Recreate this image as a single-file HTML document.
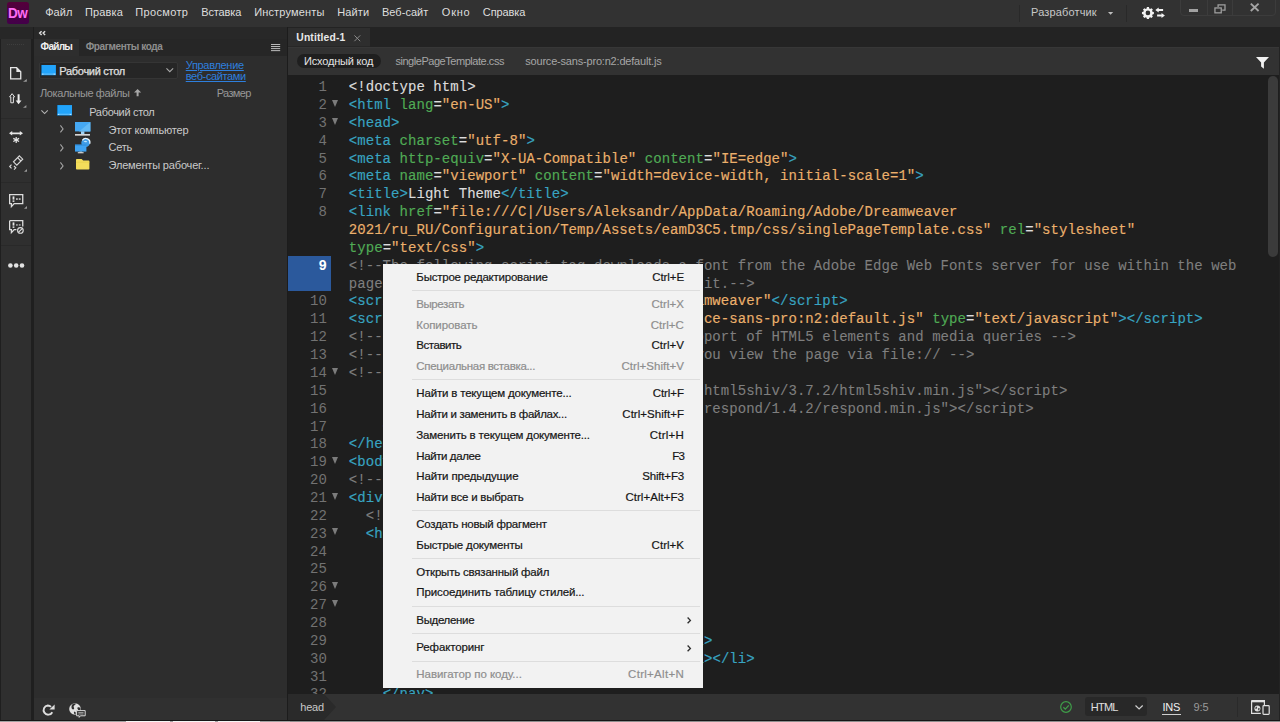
<!DOCTYPE html>
<html>
<head>
<meta charset="utf-8">
<title>Dreamweaver</title>
<style>
*{box-sizing:border-box;margin:0;padding:0}
html,body{width:1280px;height:722px;overflow:hidden;background:#1e1e1e;font-family:"Liberation Sans",sans-serif;}
body{position:relative;color:#d6d6d6;font-size:11px}
.abs{position:absolute}
.tx{position:absolute;white-space:pre;line-height:16px;height:16px;font-family:"Liberation Sans",sans-serif}
svg{position:absolute;overflow:visible}
#menubar{left:0;top:0;width:1280px;height:27px;background:#323232}
#band{left:288px;top:27px;width:992px;height:20px;background:#232323}
#ltop{left:0;top:27px;width:33px;height:12px;background:#272727}
#lefttool{left:0;top:39px;width:31px;height:682px;background:#2f2f2f;border-left:1px solid #1f1f1f}
#lsep{left:31px;top:39px;width:2.5px;height:682px;background:#1f1f1f}
#fhead{left:33.5px;top:27px;width:253px;height:12px;background:#282828}
#ftabs{left:33.5px;top:39px;width:253px;height:16.5px;background:#262626}
#ftab1{left:33.5px;top:39px;width:45.5px;height:17px;background:#2e2e2e}
#files{left:33.5px;top:55.5px;width:253px;height:643px;background:#2d2d2d}
#fbot{left:33.5px;top:698px;width:253px;height:23px;background:#303030}
#fsep{left:286.5px;top:27px;width:1.5px;height:694px;background:#1c1c1c}
#doctab{left:288px;top:28.4px;width:82px;height:18.6px;background:#2e2e2e;border-bottom:0.8px solid #272727}
#doctool{left:288px;top:47px;width:992px;height:28px;background:#323232;border-top:1px solid #373737}
#pill{left:297px;top:53.5px;width:83.5px;height:14.5px;background:#1f1f1f;border-radius:8px}
#code{left:288px;top:75px;width:992px;height:618.5px;background:#1e1e1e;overflow:hidden}
#status{left:288px;top:693.5px;width:992px;height:27px;background:#323232}
#bottom{left:0;top:719.6px;width:1280px;height:2.4px;background:#a2a2a2;border-top:1px solid #161616}
.ln{position:absolute;left:0;width:38.8px;text-align:right;font-family:"Liberation Mono",monospace;font-size:14px;line-height:18px;color:#727272;height:18px}
.ln.cur{color:#fff;font-weight:700}
.cl{position:absolute;left:60.8px;font-family:"Liberation Mono",monospace;font-size:14px;line-height:18px;height:18px;white-space:pre;color:#dcdcdc;letter-spacing:0.053px;-webkit-text-stroke:0.15px}
.t{color:#38a4c1}.a{color:#50ab55}.s{color:#ebb06c}.c{color:#7f7f7f;-webkit-text-stroke:0.08px}.w{color:#dcdcdc}
.fold{position:absolute;left:43.8px;width:0;height:0;border-left:3.9px solid transparent;border-right:3.9px solid transparent;border-top:7.4px solid #7c7c7c}
#curln{left:0;top:180.8px;width:43.2px;height:35.4px;background:#2b599c}
#scroll{left:1268.1px;top:75.6px;width:10.4px;height:181.4px;background:#3b3b3b;border-radius:5.2px}
#ctx{left:382.7px;top:263.7px;width:320.3px;height:424.1px;background:#f2f2f2}
#ctx .sep{position:absolute;left:29.8px;width:288px;height:1px;background:#dddddd}
#htmlbox{left:1085px;top:697.2px;width:62.3px;height:18.8px;background:#282828;border-radius:3px}
#crumb{left:288px;top:693.5px;width:36px;height:27px;background:#2a2a2a}
#crumbarrow{left:324px;top:693.5px;width:0;height:0;border-top:13.5px solid transparent;border-bottom:13.5px solid transparent;border-left:12px solid #2a2a2a}
#insul{left:1162px;top:713.5px;width:19px;height:1px;background:#d0d0d0}
#dd{left:38.5px;top:61.6px;width:139.2px;height:17.2px;background:#262626;border:1px solid #353535;border-radius:2px}
#winctl{left:1180.2px;top:-1px;width:96px;height:17.2px;border:1px solid #3c3c3c;border-radius:0 0 4px 4px}
.wdiv{position:absolute;top:0;width:1px;height:15.8px;background:#3c3c3c}
.msep{position:absolute;top:5px;width:1px;height:17px;background:#292929}
.hsep{position:absolute;left:1px;width:30px;height:1px;background:#292929}
</style>
</head>
<body>
<div id="menubar" class="abs"></div>
<div id="band" class="abs"></div>
<div id="ltop" class="abs"></div>
<div id="lefttool" class="abs"></div>
<div id="lsep" class="abs"></div>
<div id="fhead" class="abs"></div>
<div id="ftabs" class="abs"></div>
<div id="ftab1" class="abs"></div>
<div id="files" class="abs"></div>
<div id="fbot" class="abs"></div>
<div id="fsep" class="abs"></div>
<div id="doctab" class="abs"></div>
<div id="doctool" class="abs"></div>
<div id="pill" class="abs"></div>
<div id="code" class="abs">
<div id="curln" class="abs"></div>
<div class="ln" style="top:3.17px">1</div>
<div class="cl" style="top:3.17px"><span class="w">&lt;!doctype html&gt;</span></div>
<div class="ln" style="top:21.03px">2</div>
<div class="fold" style="top:24.76px"></div>
<div class="cl" style="top:21.03px"><span class="t">&lt;html</span> <span class="a">lang</span><span class="w">=</span><span class="s">&quot;en-US&quot;</span><span class="t">&gt;</span></div>
<div class="ln" style="top:38.89px">3</div>
<div class="fold" style="top:42.62px"></div>
<div class="cl" style="top:38.89px"><span class="t">&lt;head&gt;</span></div>
<div class="ln" style="top:56.75px">4</div>
<div class="cl" style="top:56.75px"><span class="t">&lt;meta</span> <span class="a">charset</span><span class="w">=</span><span class="s">&quot;utf-8&quot;</span><span class="t">&gt;</span></div>
<div class="ln" style="top:74.61px">5</div>
<div class="cl" style="top:74.61px"><span class="t">&lt;meta</span> <span class="a">http-equiv</span><span class="w">=</span><span class="s">&quot;X-UA-Compatible&quot;</span> <span class="a">content</span><span class="w">=</span><span class="s">&quot;IE=edge&quot;</span><span class="t">&gt;</span></div>
<div class="ln" style="top:92.47px">6</div>
<div class="cl" style="top:92.47px"><span class="t">&lt;meta</span> <span class="a">name</span><span class="w">=</span><span class="s">&quot;viewport&quot;</span> <span class="a">content</span><span class="w">=</span><span class="s">&quot;width=device-width, initial-scale=1&quot;</span><span class="t">&gt;</span></div>
<div class="ln" style="top:110.33px">7</div>
<div class="cl" style="top:110.33px"><span class="t">&lt;title&gt;</span><span class="w">Light Theme</span><span class="t">&lt;/title&gt;</span></div>
<div class="ln" style="top:128.19px">8</div>
<div class="cl" style="top:128.19px"><span class="t">&lt;link</span> <span class="a">href</span><span class="w">=</span><span class="s">&quot;file:///C|/Users/Aleksandr/AppData/Roaming/Adobe/Dreamweaver</span></div>
<div class="cl" style="top:146.05px"><span class="s">2021/ru_RU/Configuration/Temp/Assets/eamD3C5.tmp/css/singlePageTemplate.css&quot;</span> <span class="a">rel</span><span class="w">=</span><span class="s">&quot;stylesheet&quot;</span></div>
<div class="cl" style="top:163.91px"><span class="a">type</span><span class="w">=</span><span class="s">&quot;text/css&quot;</span><span class="t">&gt;</span></div>
<div class="ln cur" style="top:181.77px">9</div>
<div class="cl" style="top:181.77px"><span class="c">&lt;!--The following script tag downloads a font from the Adobe Edge Web Fonts server for use within the web</span></div>
<div class="cl" style="top:199.63px"><span class="c">page. We recommend that you do not modify it.--&gt;</span></div>
<div class="ln" style="top:217.49px">10</div>
<div class="cl" style="top:217.49px"><span class="t">&lt;script&gt;</span><span class="w">var __adobewebfontsappname__=</span><span class="s">&quot;dreamweaver&quot;</span><span class="t">&lt;/script&gt;</span></div>
<div class="ln" style="top:235.35px">11</div>
<div class="cl" style="top:235.35px"><span class="t">&lt;scr</span>                                      <span class="s">ce-sans-pro:n2:default.js&quot;</span> <span class="a">type</span><span class="w">=</span><span class="s">&quot;text/javascript&quot;</span><span class="t">&gt;&lt;/script&gt;</span></div>
<div class="ln" style="top:253.21px">12</div>
<div class="cl" style="top:253.21px"><span class="c">&lt;!-- HTML5 shim and Respond.js for IE8 support of HTML5 elements and media queries --&gt;</span></div>
<div class="ln" style="top:271.07px">13</div>
<div class="cl" style="top:271.07px"><span class="c">&lt;!-- WARNING: Respond.js doesn&#x27;t work if you view the page via file:// --&gt;</span></div>
<div class="ln" style="top:288.93px">14</div>
<div class="fold" style="top:292.66px"></div>
<div class="cl" style="top:288.93px"><span class="c">&lt;!--[if lt IE 9]&gt;</span></div>
<div class="ln" style="top:306.79px">15</div>
<div class="cl" style="top:306.79px"><span class="c">                                          html5shiv/3.7.2/html5shiv.min.js&quot;&gt;&lt;/script&gt;</span></div>
<div class="ln" style="top:324.65px">16</div>
<div class="cl" style="top:324.65px"><span class="c">                                          respond/1.4.2/respond.min.js&quot;&gt;&lt;/script&gt;</span></div>
<div class="ln" style="top:342.51px">17</div>
<div class="cl" style="top:342.51px"><span class="c">    &lt;![endif]--&gt;</span></div>
<div class="ln" style="top:360.37px">18</div>
<div class="cl" style="top:360.37px"><span class="t">&lt;/head&gt;</span></div>
<div class="ln" style="top:378.23px">19</div>
<div class="fold" style="top:381.96px"></div>
<div class="cl" style="top:378.23px"><span class="t">&lt;body&gt;</span></div>
<div class="ln" style="top:396.09px">20</div>
<div class="cl" style="top:396.09px"><span class="c">&lt;!-- Main Container --&gt;</span></div>
<div class="ln" style="top:413.95px">21</div>
<div class="fold" style="top:417.68px"></div>
<div class="cl" style="top:413.95px"><span class="t">&lt;div</span> <span class="a">class</span><span class="w">=</span><span class="s">&quot;container&quot;</span><span class="t">&gt;</span></div>
<div class="ln" style="top:431.81px">22</div>
<div class="cl" style="top:431.81px">  <span class="c">&lt;!-- Navigation --&gt;</span></div>
<div class="ln" style="top:449.67px">23</div>
<div class="fold" style="top:453.40px"></div>
<div class="cl" style="top:449.67px">  <span class="t">&lt;header&gt;</span> <span class="t">&lt;a</span> <span class="a">href</span><span class="w">=</span><span class="s">&quot;&quot;</span><span class="t">&gt;</span></div>
<div class="ln" style="top:467.53px">24</div>
<div class="cl" style="top:467.53px">    <span class="t">&lt;h4</span> <span class="a">class</span><span class="w">=</span><span class="s">&quot;logo&quot;</span><span class="t">&gt;</span><span class="w">LIGHT</span><span class="t">&lt;/h4&gt;</span></div>
<div class="ln" style="top:485.39px">25</div>
<div class="cl" style="top:485.39px">    <span class="t">&lt;/a&gt;</span></div>
<div class="ln" style="top:503.25px">26</div>
<div class="fold" style="top:506.98px"></div>
<div class="cl" style="top:503.25px">    <span class="t">&lt;nav&gt;</span></div>
<div class="ln" style="top:521.11px">27</div>
<div class="fold" style="top:524.84px"></div>
<div class="cl" style="top:521.11px">      <span class="t">&lt;ul&gt;</span></div>
<div class="ln" style="top:538.97px">28</div>
<div class="cl" style="top:538.97px">        <span class="t">&lt;li&gt;</span><span class="t">&lt;a</span> <span class="a">href</span><span class="w">=</span><span class="s">&quot;#hero&quot;</span><span class="t">&gt;</span><span class="w">HOME</span><span class="t">&lt;/a&gt;&lt;/li&gt;</span></div>
<div class="ln" style="top:556.83px">29</div>
<div class="cl" style="top:556.83px">        <span class="t">&lt;li&gt;</span><span class="t">&lt;a</span> <span class="a">href</span><span class="w">=</span><span class="s">&quot;#about&quot;</span><span class="t">&gt;</span><span class="w">ABOUT</span><span class="t">&lt;/a&gt;&lt;/li&gt;</span></div>
<div class="ln" style="top:574.69px">30</div>
<div class="cl" style="top:574.69px">        <span class="t">&lt;li&gt;</span> <span class="t">&lt;a</span> <span class="a">href</span><span class="w">=</span><span class="s">&quot;#contact&quot;</span><span class="t">&gt;</span><span class="w">CONTACT</span><span class="t">&lt;/a&gt;&lt;/li&gt;</span></div>
<div class="ln" style="top:592.55px">31</div>
<div class="cl" style="top:592.55px">      <span class="t">&lt;/ul&gt;</span></div>
<div class="ln" style="top:610.41px">32</div>
<div class="cl" style="top:610.41px">    <span class="t">&lt;/nav&gt;</span></div>
<div class="ln" style="top:628.27px">33</div>
<div class="cl" style="top:628.27px">  <span class="t">&lt;/header&gt;</span></div>
</div>
<div id="scroll" class="abs"></div>
<div id="status" class="abs"></div>
<div id="crumb" class="abs"></div>
<div id="crumbarrow" class="abs"></div>
<div id="htmlbox" class="abs"></div>
<div id="insul" class="abs"></div>
<div id="dd" class="abs"></div>
<div class="abs" style="left:1278.6px;top:27px;width:1.4px;height:693px;background:#232323"></div>
<div id="bottom" class="abs"><div class="abs" style="left:126px;top:0;width:43.5px;height:3px;background:#f4f4f4"></div><div class="abs" style="left:173px;top:0;width:42px;height:3px;background:#f4f4f4"></div><div class="abs" style="left:218px;top:0;width:42px;height:3px;background:#f4f4f4"></div><div class="abs" style="left:290px;top:0;width:990px;height:3px;background:#8e8e8e"></div></div>
<div id="winctl" class="abs"><div class="wdiv" style="left:26px"></div><div class="wdiv" style="left:51px"></div></div>
<div class="msep" style="left:1018.5px"></div>
<div class="msep" style="left:1126px"></div>
<div id="ctx" class="abs"><div class="sep" style="top:26.40px"></div><div class="sep" style="top:115.70px"></div><div class="sep" style="top:246.30px"></div><div class="sep" style="top:294.70px"></div><div class="sep" style="top:342.40px"></div><div class="sep" style="top:369.30px"></div><div class="sep" style="top:397.10px"></div></div>
<!-- Dw logo -->
<div class="abs" style="left:6.8px;top:2.1px;width:22.1px;height:21.6px;background:linear-gradient(#54003a,#43004a);border-radius:2.5px"></div>
<div class="abs" style="left:7.6px;top:3.6px;width:21px;height:18px;font-size:15px;line-height:18px;font-weight:700;color:#ff6cf4;letter-spacing:-0.6px;transform:scaleX(0.9);transform-origin:0 0;white-space:pre">Dw</div>
<!-- workspace dropdown arrow -->
<svg style="left:1107.6px;top:12px" width="5.2" height="2.8" viewBox="0 0 5.2 2.8"><path d="M0 0H5.2L2.6 2.8Z" fill="#bdbdbd"/></svg>
<!-- gear + sync arrows -->
<svg style="left:1142.2px;top:7.3px" width="24" height="12" viewBox="0 0 24 12">
<g fill="#f2f2f2">
<g transform="translate(0.1,0.1) scale(0.94)"><path fill-rule="evenodd" d="M5.1 0h2.2l.3 1.500 1 .45 1.300-.85 1.550 1.550-.85 1.300.45 1 1.500.3v2.200l-1.500.3-.45 1 .85 1.300-1.550 1.550-1.300-.85-1 .45-.3 1.500H5.100l-.3-1.500-1-.45-1.300.85L.95 10.050l.85-1.300-.45-1L-.15 7.450v-2.200l1.500-.3.45-1-.85-1.300L2.500 1.100l1.300.85 1-.45zM6.200 3.700a2.500 2.500 0 100 5 2.500 2.500 0 000-5z"/></g>
<path d="M13.300 3.100l3.400-2.500v1.500h4.400v2h-4.400v1.500z"/>
<path d="M22.900 8.600l-3.400-2.500v1.500h-4.400v2h4.400v1.500z"/>
</g></svg>
<!-- window controls -->
<div class="abs" style="left:1188.9px;top:9.2px;width:9.6px;height:2.6px;background:#a2a2a2"></div>
<svg style="left:1213.6px;top:3.6px" width="12" height="9.6" viewBox="0 0 12 9.6"><g fill="none" stroke="#9e9e9e" stroke-width="1.3"><path d="M4.1 3V.95h6.9V6.1H8.2"/><rect x=".95" y="3.95" width="6.3" height="4.9"/></g></svg>
<svg style="left:1250px;top:3.4px" width="9.4" height="8.6" viewBox="0 0 9.4 8.6"><path d="M.8.6l7.8 7.4M8.6.6L.8 8" stroke="#a4a4a4" stroke-width="1.9" fill="none"/></svg>
<!-- collapse << -->
<svg style="left:38.6px;top:31.4px" width="7" height="4.2" viewBox="0 0 7 4.2"><path d="M2.6.2L.7 2.1l1.9 1.9M6.1.2L4.2 2.1l1.9 1.9" stroke="#dedede" stroke-width="1.5" fill="none"/></svg>
<!-- hamburger -->
<svg style="left:271.3px;top:43.8px" width="9.2" height="7.2" viewBox="0 0 9.2 7.2"><path d="M0 .5h9.2M0 2.55h9.2M0 4.6h9.2M0 6.65h9.2" stroke="#bcbcbc" stroke-width="1"/></svg>
<!-- doc tab close -->
<svg style="left:353.6px;top:34.6px" width="6.6" height="6.6" viewBox="0 0 6.6 6.6"><path d="M.4.4l5.8 5.8M6.2.4L.4 6.2" stroke="#8a8a8a" stroke-width="1" fill="none"/></svg>
<!-- filter -->
<svg style="left:1256px;top:57.3px" width="13" height="11.8" viewBox="0 0 13 11.8"><path d="M0 0h13L7.9 5.6v6.2L5.1 9.6V5.6z" fill="#f2f2f2"/></svg>
<!-- files: dropdown monitor -->
<svg style="left:41.400px;top:64.500px" width="15" height="10.500" viewBox="0 0 15 10.7"><rect x="0" y="0" width="15" height="10.7" fill="#0e5c94"/><rect x=".6" y="0" width="14.4" height="10" fill="#22a4fb"/><rect x=".6" y="8.6" width="14.4" height="1.4" fill="#58bbfc"/><rect x="1.2" y="8.8" width="1" height="1" fill="#e8f6ff"/><rect x="12.8" y="8.8" width="1" height="1" fill="#e8f6ff"/></svg>
<svg style="left:166px;top:68.400px" width="7.600" height="4.400" viewBox="0 0 8.400 4.800"><path d="M.5.500l3.700 3.600L7.900.5" stroke="#aaaaaa" stroke-width="1.2" fill="none"/></svg>
<!-- sort arrow -->
<svg style="left:133.6px;top:89px" width="7.2" height="7.2" viewBox="0 0 7.2 7.2"><path d="M3.600 0L7.200 3.600H4.600V7.200H2.600V3.600H0z" fill="#a8a8a8"/></svg>
<!-- tree row 1 -->
<svg style="left:41.4px;top:109.5px" width="7.2" height="4.2" viewBox="0 0 7.2 4.2"><path d="M.4.4l3.2 3.2L6.8.4" stroke="#b4b4b4" stroke-width="1.1" fill="none"/></svg>
<svg style="left:56.6px;top:105.4px" width="15" height="10.9" viewBox="0 0 15 10.7"><rect x="0" y="0" width="15" height="10.7" fill="#0e5c94"/><rect x=".6" y="0" width="14.4" height="10" fill="#22a4fb"/><rect x=".6" y="8.6" width="14.4" height="1.4" fill="#58bbfc"/><rect x="1.2" y="8.8" width="1" height="1" fill="#e8f6ff"/><rect x="12.8" y="8.8" width="1" height="1" fill="#e8f6ff"/></svg>
<!-- tree chevrons -->
<svg style="left:59.8px;top:125.2px" width="3.600" height="7.800" viewBox="0 0 3.600 7.800"><path d="M.4.400l2.700 3.500-2.700 3.500" stroke="#a4a4a4" stroke-width="1.050" fill="none"/></svg>
<svg style="left:59.8px;top:143.5px" width="3.600" height="7.800" viewBox="0 0 3.600 7.800"><path d="M.4.400l2.700 3.500-2.700 3.500" stroke="#a4a4a4" stroke-width="1.050" fill="none"/></svg>
<svg style="left:59.8px;top:161.5px" width="3.600" height="7.800" viewBox="0 0 3.600 7.800"><path d="M.4.400l2.700 3.500-2.700 3.500" stroke="#a4a4a4" stroke-width="1.050" fill="none"/></svg>
<!-- computer -->
<svg style="left:75.2px;top:122.3px" width="15.400" height="13.800" viewBox="0 0 15.400 13.800"><rect x="0" y="0" width="15.400" height="9.400" fill="#45a8f3"/><path d="M15.400 0V9.400H4z" fill="#63baf6"/><rect x="6" y="9.400" width="3.400" height="2.600" fill="#9ed2f5"/><rect x="0" y="12.100" width="15" height="1.500" fill="#e6e6e6"/></svg>
<!-- network -->
<svg style="left:75.2px;top:138.2px" width="15.400" height="15.400" viewBox="0 0 15.400 15.400"><circle cx="10.600" cy="4.800" r="4.300" fill="#3f9ce6"/><path d="M7.400 2.300A4.100 4.100 0 0114.700 5.800" fill="none" stroke="#eaf6ff" stroke-width="1.300"/><path d="M8.600 3.600c1-.9 2.600-1 3.600-.2-.6 1-2.400 1.400-3.600.2z" fill="#bfe3fb"/><rect x="0" y="6.600" width="11.400" height="7" fill="#3fa3f2"/><rect x="0" y="6.600" width="11.400" height=".9" fill="#2b86d2"/><rect x="4.400" y="13.600" width="2.600" height=".8" fill="#9ed2f5"/><rect x="2.800" y="14.200" width="5.800" height="1.100" fill="#e0e0e0"/></svg>
<!-- folder -->
<svg style="left:76px;top:159.3px" width="13.4" height="10.6" viewBox="0 0 13.4 10.6"><path d="M0 .8Q0 0 .8 0H5.6L7.2 1.6H12.6Q13.4 1.6 13.4 2.4V9.8Q13.4 10.6 12.6 10.6H.8Q0 10.6 0 9.8z" fill="#f3dd5b"/><path d="M0 3.2H13.4" stroke="#e6cc48" stroke-width=".6"/></svg>
<!-- left toolbar grip -->
<div class="abs" style="left:7px;top:43.5px;width:17px;height:1px;background:repeating-linear-gradient(90deg,#3e3e3e 0 1px,transparent 1px 2px)"></div>
<!-- new file -->
<svg style="left:10px;top:66.7px" width="11.4" height="12.6" viewBox="0 0 11.4 12.6"><path d="M.65.65H6.6L10.75 4.8V11.95H.65z" fill="none" stroke="#e6e6e6" stroke-width="1.3"/><path d="M6.4.4V5H11z" fill="#e6e6e6"/></svg>
<svg style="left:23px;top:79px" width="3.8" height="2.8" viewBox="0 0 3.8 2.8"><path d="M3.8 0V2.8H0z" fill="#9a9a9a"/></svg>
<!-- up/down arrows -->
<svg style="left:9.3px;top:93px" width="12.6" height="11.4" viewBox="0 0 12.6 11.4"><path d="M3.1.7L5.6 3.9H4.4V9.8H1.8V3.9H.6z" fill="none" stroke="#e6e6e6" stroke-width="1"/><path d="M9.6 11.3L6.7 7.6H8.6V1.2H10.6V7.6H12.5z" fill="#ececec"/></svg>
<svg style="left:23.4px;top:104.6px" width="3.4" height="2.8" viewBox="0 0 3.4 2.8"><path d="M3.4 0V2.8H0z" fill="#9a9a9a"/></svg>
<div class="hsep" style="top:118px"></div>
<!-- expand-all -->
<svg style="left:9.300px;top:130.900px" width="14" height="12.400" viewBox="0 0 14 12.400"><path d="M0 2.300L3.200 0V1.400H10.800V0L14 2.300L10.800 4.600V3.200H3.200V4.600z" fill="#e6e6e6"/><path d="M7.200 5.900V12M4.300 7.400l5.800 3.100M10.100 7.400L4.300 10.500" stroke="#e6e6e6" stroke-width="1.200" fill="none"/></svg>
<!-- format source -->
<svg style="left:9px;top:155px" width="15" height="15" viewBox="0 0 15 15"><g fill="none" stroke="#d8d8d8" stroke-width="1.150"><path d="M10.400.900l3.300 3.300-5.900 5.900-3.300-3.300z"/><path d="M8.600 2.700l3.300 3.300"/><path d="M2.500 9.700L.7 11.500 2.500 13.300M5 11l1.800 1.800L5 14.600"/></g></svg>
<svg style="left:23.800px;top:168.600px" width="3" height="2.800" viewBox="0 0 3 2.800"><path d="M3 0V2.800H0z" fill="#9a9a9a"/></svg>
<div class="hsep" style="top:182px"></div>
<!-- comment icons -->
<svg style="left:9px;top:194.4px" width="14.4" height="14" viewBox="0 0 14.4 14"><path d="M.65.65H13.75V9.6H5.2L2.4 12.6V9.6H.65z" fill="none" stroke="#dcdcdc" stroke-width="1.3"/><rect x="3.6" y="2.4" width="1.8" height="3.2" fill="#e6e6e6"/><rect x="3.6" y="6.4" width="1.8" height="1.5" fill="#e6e6e6"/><rect x="7" y="4.3" width="1.8" height="1.5" fill="#cfcfcf"/><rect x="9.8" y="4.3" width="1.8" height="1.5" fill="#cfcfcf"/></svg>
<svg style="left:23.8px;top:206.2px" width="3" height="2.8" viewBox="0 0 3 2.8"><path d="M3 0V2.8H0z" fill="#9a9a9a"/></svg>
<svg style="left:9px;top:219.8px" width="15" height="14" viewBox="0 0 15 14"><path d="M.65.65H13.75V6.4M7.4 9.6H5.2L2.4 12.6V9.6H.65V.65" fill="none" stroke="#dcdcdc" stroke-width="1.3"/><rect x="3.6" y="2.4" width="1.8" height="3.2" fill="#e6e6e6"/><rect x="3.6" y="6.4" width="1.8" height="1.5" fill="#e6e6e6"/><rect x="7" y="4.3" width="1.8" height="1.3" fill="#bdbdbd"/><rect x="9.8" y="4.3" width="1.8" height="1.3" fill="#bdbdbd"/><circle cx="11.4" cy="10.4" r="2.8" fill="none" stroke="#e0e0e0" stroke-width="1.1"/><path d="M9.6 12.2l3.6-3.6" stroke="#e0e0e0" stroke-width="1.1"/></svg>
<div class="hsep" style="top:245px"></div>
<!-- more dots -->
<svg style="left:7.8px;top:262.6px" width="16.4" height="5" viewBox="0 0 16.4 5"><circle cx="2.4" cy="2.5" r="2.3" fill="#e2e2e2"/><circle cx="8.2" cy="2.5" r="2.3" fill="#e2e2e2"/><circle cx="14" cy="2.5" r="2.3" fill="#e2e2e2"/></svg>
<!-- refresh -->
<svg style="left:41.8px;top:704.4px" width="12.8" height="12" viewBox="0 0 12.8 12"><path d="M10.3 8.2A4.6 4.6 0 115.8 1.5 4.6 4.6 0 019 2.9" fill="none" stroke="#dedede" stroke-width="1.9"/><path d="M12.6.4V5.6H7.4z" fill="#dedede"/></svg>
<!-- globe + comment -->
<svg style="left:69.4px;top:702.8px" width="16.8" height="15.2" viewBox="0 0 16.8 15.2"><circle cx="6" cy="6" r="5.8" fill="#e0e0e0"/><path d="M3.2 1.4c1.4-.9 3-.9 3.6-.6-.2 1.200-1.700 1.500-2.100 2.500-.3.900.7 1.500.4 2.400-.3.800-1.400.9-2 .3-.7-.8-1-2.900.1-4.600zM8.600 4.600c.9-.5 2.100-.3 2.700.4.400 1.100 0 2.400-.600 3.300-.800.300-1.500-.400-1.600-1.200-.1-.9-1.300-1.800-.5-2.500zM5 8.800c.8-.2 1.600.3 1.800 1 .1.700-.2 1.400-.7 1.800-.9-.4-1.500-1.800-1.100-2.800z" fill="#2f2f2f"/><path d="M7.600 7.600H16.200V12.800H11.400L10.200 14.400V12.800H7.600z" fill="#303030" stroke="#d8d8d8" stroke-width="1"/><path d="M9.300 9.600H14.600M9.300 11H14.600" stroke="#bdbdbd" stroke-width=".8"/></svg>
<!-- status: check -->
<svg style="left:1059.6px;top:700.8px" width="12" height="12" viewBox="0 0 12 12"><circle cx="6" cy="6" r="5.3" fill="none" stroke="#3f9e49" stroke-width="1.2"/><path d="M3.4 6.2l1.900 1.900 3.500-3.700" fill="none" stroke="#3f9e49" stroke-width="1.3"/></svg>
<svg style="left:1135px;top:704.6px" width="8.200" height="4.600" viewBox="0 0 8.200 4.600"><path d="M.5.5l3.600 3.500L7.700.5" stroke="#d0d0d0" stroke-width="1.200" fill="none"/></svg>
<div class="abs" style="left:1236.500px;top:697px;width:1px;height:20px;background:#2a2a2a"></div>
<!-- device preview -->
<svg style="left:1251px;top:699.800px" width="19" height="15" viewBox="0 0 19 15"><path d="M.6.600H13.400V5M9.800 13.400H.6V.6" fill="none" stroke="#e0e0e0" stroke-width="1.200"/><path d="M.6 1.400H13.400" stroke="#e0e0e0" stroke-width="1.800"/><circle cx="6.400" cy="8.400" r="3" fill="#dcdcdc"/><path d="M5 6.600c.8.200 1.200 1 .8 1.800-.4.600-1.200.4-1.600 0zM7.400 8c.6-.2 1.200.2 1.400.8-.2.800-.8 1.400-1.400 1.600-.4-.8-.4-1.600 0-2.400z" fill="#323232"/><rect x="12" y="5.600" width="6.200" height="8.800" rx=".8" fill="#323232" stroke="#e0e0e0" stroke-width="1.200"/></svg>
<!-- ctx submenu chevrons -->
<svg style="left:687.300px;top:616.500px" width="4.200" height="6.800" viewBox="0 0 4.200 6.800"><path d="M.6.500l2.800 2.900-2.800 2.900" stroke="#2e2e2e" stroke-width="1.350" fill="none"/></svg>
<svg style="left:687.300px;top:644.600px" width="4.200" height="6.800" viewBox="0 0 4.200 6.800"><path d="M.6.500l2.800 2.900-2.800 2.900" stroke="#2e2e2e" stroke-width="1.350" fill="none"/></svg>

<span class="tx" style="left:45.13px;top:3.99px;font-size:11px;color:#dedede;font-weight:400;letter-spacing:0.081px;">Файл</span>
<span class="tx" style="left:84.93px;top:3.99px;font-size:11px;color:#dedede;font-weight:400;letter-spacing:0.133px;">Правка</span>
<span class="tx" style="left:135.33px;top:3.99px;font-size:11px;color:#dedede;font-weight:400;letter-spacing:0.340px;">Просмотр</span>
<span class="tx" style="left:201.33px;top:3.99px;font-size:11px;color:#dedede;font-weight:400;letter-spacing:-0.160px;">Вставка</span>
<span class="tx" style="left:254.13px;top:3.99px;font-size:11px;color:#dedede;font-weight:400;letter-spacing:0.171px;">Инструменты</span>
<span class="tx" style="left:337.23px;top:3.99px;font-size:11px;color:#dedede;font-weight:400;letter-spacing:0.136px;">Найти</span>
<span class="tx" style="left:381.93px;top:3.99px;font-size:11px;color:#dedede;font-weight:400;letter-spacing:0.045px;">Веб-сайт</span>
<span class="tx" style="left:441.83px;top:3.99px;font-size:11px;color:#dedede;font-weight:400;letter-spacing:0.752px;">Окно</span>
<span class="tx" style="left:482.83px;top:3.99px;font-size:11px;color:#dedede;font-weight:400;letter-spacing:-0.098px;">Справка</span>
<span class="tx" style="left:1031.03px;top:3.99px;font-size:11px;color:#c8c8c8;font-weight:400;letter-spacing:0.147px;">Разработчик</span>
<span class="tx" style="left:296.28px;top:29.63px;font-size:10.3px;color:#e8e8e8;font-weight:700;letter-spacing:0.174px;">Untitled-1</span>
<span class="tx" style="left:304.03px;top:52.99px;font-size:11px;color:#e4e4e4;font-weight:400;letter-spacing:-0.186px;">Исходный код</span>
<span class="tx" style="left:395.43px;top:52.99px;font-size:11px;color:#a6a6a6;font-weight:400;letter-spacing:-0.457px;">singlePageTemplate.css</span>
<span class="tx" style="left:525.23px;top:52.99px;font-size:11px;color:#a6a6a6;font-weight:400;letter-spacing:-0.193px;">source-sans-pro:n2:default.js</span>
<span class="tx" style="left:40.60px;top:38.73px;font-size:10px;color:#f0f0f0;font-weight:700;letter-spacing:-0.728px;">Файлы</span>
<span class="tx" style="left:85.70px;top:38.73px;font-size:10px;color:#8e8e8e;font-weight:700;letter-spacing:-0.396px;">Фрагменты кода</span>
<span class="tx" style="left:59.23px;top:62.59px;font-size:11px;color:#e0e0e0;font-weight:400;letter-spacing:-0.274px;-webkit-text-stroke:0.25px">Рабочий стол</span>
<span class="tx" style="left:185.73px;top:56.89px;font-size:11px;color:#2d7fde;font-weight:400;letter-spacing:-0.309px;text-decoration:underline">Управление</span>
<span class="tx" style="left:185.73px;top:67.99px;font-size:11px;color:#2d7fde;font-weight:400;letter-spacing:-0.374px;text-decoration:underline">веб-сайтами</span>
<span class="tx" style="left:39.93px;top:85.29px;font-size:11px;color:#989898;font-weight:400;letter-spacing:-0.386px;">Локальные файлы</span>
<span class="tx" style="left:216.63px;top:85.29px;font-size:11px;color:#989898;font-weight:400;letter-spacing:-0.590px;">Размер</span>
<span class="tx" style="left:89.23px;top:103.89px;font-size:11px;color:#cacaca;font-weight:400;letter-spacing:-0.324px;">Рабочий стол</span>
<span class="tx" style="left:108.53px;top:121.79px;font-size:11px;color:#cacaca;font-weight:400;letter-spacing:-0.164px;">Этот компьютер</span>
<span class="tx" style="left:108.53px;top:139.49px;font-size:11px;color:#cacaca;font-weight:400;letter-spacing:-0.225px;">Сеть</span>
<span class="tx" style="left:108.53px;top:157.29px;font-size:11px;color:#cacaca;font-weight:400;letter-spacing:-0.167px;">Элементы рабочег...</span>
<span class="tx" style="left:300.23px;top:698.89px;font-size:11px;color:#c8c8c8;font-weight:400;letter-spacing:-0.179px;">head</span>
<span class="tx" style="left:1090.73px;top:698.89px;font-size:11px;color:#e0e0e0;font-weight:400;letter-spacing:-0.746px;">HTML</span>
<span class="tx" style="left:1162.53px;top:698.89px;font-size:11px;color:#f0f0f0;font-weight:400;letter-spacing:-0.225px;">INS</span>
<span class="tx" style="left:1193.43px;top:698.89px;font-size:11px;color:#9a9a9a;font-weight:400;letter-spacing:-0.009px;">9:5</span>
<span class="tx" style="left:416.30px;top:269.02px;font-size:11.5px;color:#161616;font-weight:400;letter-spacing:-0.216px;-webkit-text-stroke:0.2px">Быстрое редактирование</span>
<span class="tx" style="left:652.30px;top:269.02px;font-size:11.5px;color:#161616;font-weight:400;letter-spacing:-0.096px;-webkit-text-stroke:0.2px">Ctrl+E</span>
<span class="tx" style="left:416.30px;top:295.62px;font-size:11.5px;color:#8e8e8e;font-weight:400;letter-spacing:-0.431px;-webkit-text-stroke:0.2px">Вырезать</span>
<span class="tx" style="left:651.50px;top:295.62px;font-size:11.5px;color:#8e8e8e;font-weight:400;letter-spacing:0.037px;-webkit-text-stroke:0.2px">Ctrl+X</span>
<span class="tx" style="left:416.30px;top:316.72px;font-size:11.5px;color:#8e8e8e;font-weight:400;letter-spacing:-0.092px;-webkit-text-stroke:0.2px">Копировать</span>
<span class="tx" style="left:650.70px;top:316.72px;font-size:11.5px;color:#8e8e8e;font-weight:400;letter-spacing:0.066px;-webkit-text-stroke:0.2px">Ctrl+C</span>
<span class="tx" style="left:416.30px;top:337.42px;font-size:11.5px;color:#161616;font-weight:400;letter-spacing:-0.468px;-webkit-text-stroke:0.2px">Вставить</span>
<span class="tx" style="left:651.50px;top:337.42px;font-size:11.5px;color:#161616;font-weight:400;letter-spacing:0.037px;-webkit-text-stroke:0.2px">Ctrl+V</span>
<span class="tx" style="left:416.30px;top:358.32px;font-size:11.5px;color:#8e8e8e;font-weight:400;letter-spacing:-0.320px;-webkit-text-stroke:0.2px">Специальная вставка...</span>
<span class="tx" style="left:621.50px;top:358.32px;font-size:11.5px;color:#8e8e8e;font-weight:400;letter-spacing:0.042px;-webkit-text-stroke:0.2px">Ctrl+Shift+V</span>
<span class="tx" style="left:416.30px;top:385.32px;font-size:11.5px;color:#161616;font-weight:400;letter-spacing:-0.180px;-webkit-text-stroke:0.2px">Найти в текущем документе...</span>
<span class="tx" style="left:652.70px;top:385.32px;font-size:11.5px;color:#161616;font-weight:400;letter-spacing:-0.053px;-webkit-text-stroke:0.2px">Ctrl+F</span>
<span class="tx" style="left:416.30px;top:406.02px;font-size:11.5px;color:#161616;font-weight:400;letter-spacing:-0.298px;-webkit-text-stroke:0.2px">Найти и заменить в файлах...</span>
<span class="tx" style="left:622.30px;top:406.02px;font-size:11.5px;color:#161616;font-weight:400;letter-spacing:0.029px;-webkit-text-stroke:0.2px">Ctrl+Shift+F</span>
<span class="tx" style="left:416.30px;top:426.77px;font-size:11.5px;color:#161616;font-weight:400;letter-spacing:-0.178px;-webkit-text-stroke:0.2px">Заменить в текущем документе...</span>
<span class="tx" style="left:649.70px;top:426.77px;font-size:11.5px;color:#161616;font-weight:400;letter-spacing:0.233px;-webkit-text-stroke:0.2px">Ctrl+H</span>
<span class="tx" style="left:416.30px;top:447.52px;font-size:11.5px;color:#161616;font-weight:400;letter-spacing:-0.411px;-webkit-text-stroke:0.2px">Найти далее</span>
<span class="tx" style="left:672.30px;top:447.52px;font-size:11.5px;color:#161616;font-weight:400;letter-spacing:-0.858px;-webkit-text-stroke:0.2px">F3</span>
<span class="tx" style="left:416.30px;top:468.22px;font-size:11.5px;color:#161616;font-weight:400;letter-spacing:-0.150px;-webkit-text-stroke:0.2px">Найти предыдущие</span>
<span class="tx" style="left:642.20px;top:468.22px;font-size:11.5px;color:#161616;font-weight:400;letter-spacing:-0.169px;-webkit-text-stroke:0.2px">Shift+F3</span>
<span class="tx" style="left:416.30px;top:488.62px;font-size:11.5px;color:#161616;font-weight:400;letter-spacing:-0.243px;-webkit-text-stroke:0.2px">Найти все и выбрать</span>
<span class="tx" style="left:625.40px;top:488.62px;font-size:11.5px;color:#161616;font-weight:400;letter-spacing:0.039px;-webkit-text-stroke:0.2px">Ctrl+Alt+F3</span>
<span class="tx" style="left:416.30px;top:515.82px;font-size:11.5px;color:#161616;font-weight:400;letter-spacing:-0.250px;-webkit-text-stroke:0.2px">Создать новый фрагмент</span>
<span class="tx" style="left:416.30px;top:536.52px;font-size:11.5px;color:#161616;font-weight:400;letter-spacing:-0.162px;-webkit-text-stroke:0.2px">Быстрые документы</span>
<span class="tx" style="left:651.60px;top:536.52px;font-size:11.5px;color:#161616;font-weight:400;letter-spacing:0.021px;-webkit-text-stroke:0.2px">Ctrl+K</span>
<span class="tx" style="left:416.30px;top:563.62px;font-size:11.5px;color:#161616;font-weight:400;letter-spacing:-0.209px;-webkit-text-stroke:0.2px">Открыть связанный файл</span>
<span class="tx" style="left:416.30px;top:584.32px;font-size:11.5px;color:#161616;font-weight:400;letter-spacing:-0.153px;-webkit-text-stroke:0.2px">Присоединить таблицу стилей...</span>
<span class="tx" style="left:416.30px;top:612.22px;font-size:11.5px;color:#161616;font-weight:400;letter-spacing:-0.337px;-webkit-text-stroke:0.2px">Выделение</span>
<span class="tx" style="left:416.30px;top:639.27px;font-size:11.5px;color:#161616;font-weight:400;letter-spacing:-0.134px;-webkit-text-stroke:0.2px">Рефакторинг</span>
<span class="tx" style="left:416.30px;top:666.12px;font-size:11.5px;color:#8e8e8e;font-weight:400;letter-spacing:-0.048px;-webkit-text-stroke:0.2px">Навигатор по коду...</span>
<span class="tx" style="left:628.10px;top:666.12px;font-size:11.5px;color:#8e8e8e;font-weight:400;letter-spacing:0.286px;-webkit-text-stroke:0.2px">Ctrl+Alt+N</span>
</body>
</html>
